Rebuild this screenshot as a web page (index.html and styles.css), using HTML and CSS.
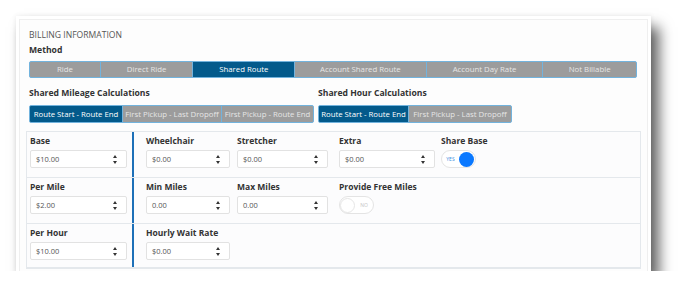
FILE: index.html
```html
<!DOCTYPE html>
<html lang="en">
<head>
    <meta charset="UTF-8">
    <title>Billing Information</title>
    <link rel="stylesheet" href="styles.css">
</head>
<body>
    <div class="card">
        <div class="card-inner">
            <div class="section-title">BILLING INFORMATION</div>
            <div class="group-label">Method</div>

            <div class="segmented method">
                <span class="seg" style="width:70px">Ride</span>
                <span class="seg" style="width:93px">Direct Ride</span>
                <span class="seg active" style="width:102px">Shared Route</span>
                <span class="seg" style="width:132px">Account Shared Route</span>
                <span class="seg" style="width:117px">Account Day Rate</span>
                <span class="seg" style="width:94px">Not Billable</span>
            </div>

            <div class="calc-row">
                <div class="calc-group">
                    <div class="group-label">Shared Mileage Calculations</div>
                    <div class="segmented small">
                        <span class="seg active" style="width:92px">Route Start - Route End</span>
                        <span class="seg" style="width:99px">First Pickup - Last Dropoff</span>
                        <span class="seg" style="width:92px">First Pickup - Route End</span>
                    </div>
                </div>
                <div class="calc-group">
                    <div class="group-label">Shared Hour Calculations</div>
                    <div class="segmented small">
                        <span class="seg active" style="width:89px">Route Start - Route End</span>
                        <span class="seg" style="width:103px">First Pickup - Last Dropoff</span>
                    </div>
                </div>
            </div>

            <!-- tarifas -->
            <div class="rates">
                <div class="rate-row">
                    <div class="rate-main">
                        <label class="field-label">Base</label>
                        <div class="num-input w-main">$10.00<span class="spin"></span></div>
                    </div>
                    <div class="rate-extra">
                        <div class="field">
                            <label class="field-label">Wheelchair</label>
                            <div class="num-input w1">$0.00<span class="spin"></span></div>
                        </div>
                        <div class="field">
                            <label class="field-label">Stretcher</label>
                            <div class="num-input w2">$0.00<span class="spin"></span></div>
                        </div>
                        <div class="field">
                            <label class="field-label">Extra</label>
                            <div class="num-input w3">$0.00<span class="spin"></span></div>
                        </div>
                        <div class="field">
                            <label class="field-label">Share Base</label>
                            <div class="toggle on"><span class="toggle-text">YES</span><span class="knob"></span></div>
                        </div>
                    </div>
                </div>

                <div class="rate-row">
                    <div class="rate-main">
                        <label class="field-label">Per Mile</label>
                        <div class="num-input w-main">$2.00<span class="spin"></span></div>
                    </div>
                    <div class="rate-extra">
                        <div class="field">
                            <label class="field-label">Min Miles</label>
                            <div class="num-input w1">0.00<span class="spin"></span></div>
                        </div>
                        <div class="field">
                            <label class="field-label">Max Miles</label>
                            <div class="num-input w2">0.00<span class="spin"></span></div>
                        </div>
                        <div class="field wide">
                            <label class="field-label">Provide Free Miles</label>
                            <div class="toggle off"><span class="knob"></span><span class="toggle-text">NO</span></div>
                        </div>
                    </div>
                </div>

                <div class="rate-row last">
                    <div class="rate-main">
                        <label class="field-label">Per Hour</label>
                        <div class="num-input w-main">$10.00<span class="spin"></span></div>
                    </div>
                    <div class="rate-extra">
                        <div class="field">
                            <label class="field-label">Hourly Wait Rate</label>
                            <div class="num-input w1">$0.00<span class="spin"></span></div>
                        </div>
                    </div>
                </div>
            </div>
        </div>
    </div>
</body>
</html>
```

FILE: styles.css
```css
:root {
    --dark-blue: #035a8b;
    --seg-gray: #9c9c9c;
    --seg-border: #72b3dd;
    --accent-blue: #1d70b8;
    --line-color: #e4e8ec;
    --label-color: #333;
}

body, html {
    margin: 0;
    padding: 0;
    background: #fff;
    font-family: 'Open Sans', 'Noto Sans', sans-serif;
    color: var(--label-color);
}

.card {
    margin: 16px 0 0 16px;
    width: 635px;
    height: 255px;
    box-sizing: border-box;
    padding: 3px 3px 0 3px;
    background: #fff;
    overflow: hidden;
    box-shadow: 8px 11px 13px rgba(0, 0, 0, 0.62), 0 0 5px rgba(0, 0, 0, 0.08);
}

.card-inner {
    height: 100%;
    box-sizing: border-box;
    border: 1px solid #efefef;
    border-bottom: none;
    padding: 9px 9px 0 9px;
    background: #fdfdfd;
}

.section-title {
    font-size: 8.6px;
    color: #555;
    line-height: 12px;
}

.group-label {
    font-size: 8.6px;
    font-weight: 700;
    color: #333;
    line-height: 13px;
    margin-top: 3px;
}

.segmented {
    display: flex;
    border: 1px solid var(--seg-border);
    border-radius: 2px;
    background: var(--seg-gray);
    overflow: hidden;
    box-sizing: border-box;
}

.segmented .seg {
    box-sizing: border-box;
    text-align: center;
    color: #e6e6e6;
    font-size: 7.8px;
    border-left: 1px solid var(--seg-border);
    white-space: nowrap;
}

.segmented .seg:first-child {
    border-left: none;
}

.segmented .seg.active {
    background: var(--dark-blue);
    color: #fff;
}

.method {
    margin-top: 4px;
    width: 608px;
    height: 17px;
}

.method .seg {
    line-height: 15px;
}

.calc-row {
    display: flex;
    gap: 4px;
    margin-top: 6px;
}

.calc-group .segmented {
    margin-top: 5px;
    display: inline-flex;
    height: 18px;
}

.small .seg {
    line-height: 16px;
}

.rates {
    margin: 8px -3px 0 -3px;
    border: 1px solid var(--line-color);
    border-bottom: none;
    background: #fcfcfd;
}

.rate-row {
    display: flex;
    height: 46px;
    border-bottom: 1px solid var(--line-color);
    box-sizing: border-box;
}

.rate-row.last {
    border-bottom: 2px solid var(--line-color);
    height: 45px;
}

.rate-main {
    width: 102px;
    padding: 3px 0 0 3px;
    border-right: 2px solid var(--accent-blue);
}

.rate-extra {
    display: flex;
    padding: 3px 0 0 12px;
}

.field {
    width: 91px;
    margin-right: 11px;
}

.field:first-child {
    width: 84px;
    margin-right: 7px;
}

.field.wide {
    width: 140px;
}

.field-label {
    display: block;
    font-size: 8.5px;
    font-weight: 700;
    color: #333;
    line-height: 12px;
    height: 13px;
}

.num-input {
    position: relative;
    box-sizing: border-box;
    height: 18px;
    margin-top: 2px;
    border: 1px solid #e2e2e2;
    border-radius: 2px;
    background: #fff;
    font-size: 7.5px;
    color: #555;
    line-height: 16px;
    padding-left: 5px;
}

.w-main { width: 97px; }
.w1 { width: 84px; }
.w2 { width: 91px; }
.w3 { width: 96px; }

/* flechitas del spinner */
.spin {
    position: absolute;
    right: 8px;
    top: 4px;
    width: 5px;
    height: 9px;
}

.spin::before,
.spin::after {
    content: "";
    position: absolute;
    left: 0;
    border-left: 2.5px solid transparent;
    border-right: 2.5px solid transparent;
}

.spin::before {
    top: 0;
    border-bottom: 3px solid #333;
}

.spin::after {
    bottom: 0;
    border-top: 3px solid #333;
}

.toggle {
    box-sizing: border-box;
    display: flex;
    align-items: center;
    width: 35px;
    height: 18px;
    margin-top: 2px;
    border: 1px solid #e4e4e4;
    border-radius: 9px;
    background: #fff;
}

.toggle-text {
    font-size: 5px;
    flex: 1;
    text-align: center;
}

.toggle.on .toggle-text {
    color: #3b8be0;
}

.toggle.off .toggle-text {
    color: #c4c4c4;
}

.knob {
    width: 15px;
    height: 15px;
    border-radius: 50%;
    box-sizing: border-box;
}

.toggle.on .knob {
    background: #0a78ff;
    margin-right: 1px;
}

.toggle.off .knob {
    background: #fff;
    border: 1px solid #e6e6e6;
    margin-left: 0;
}
```
